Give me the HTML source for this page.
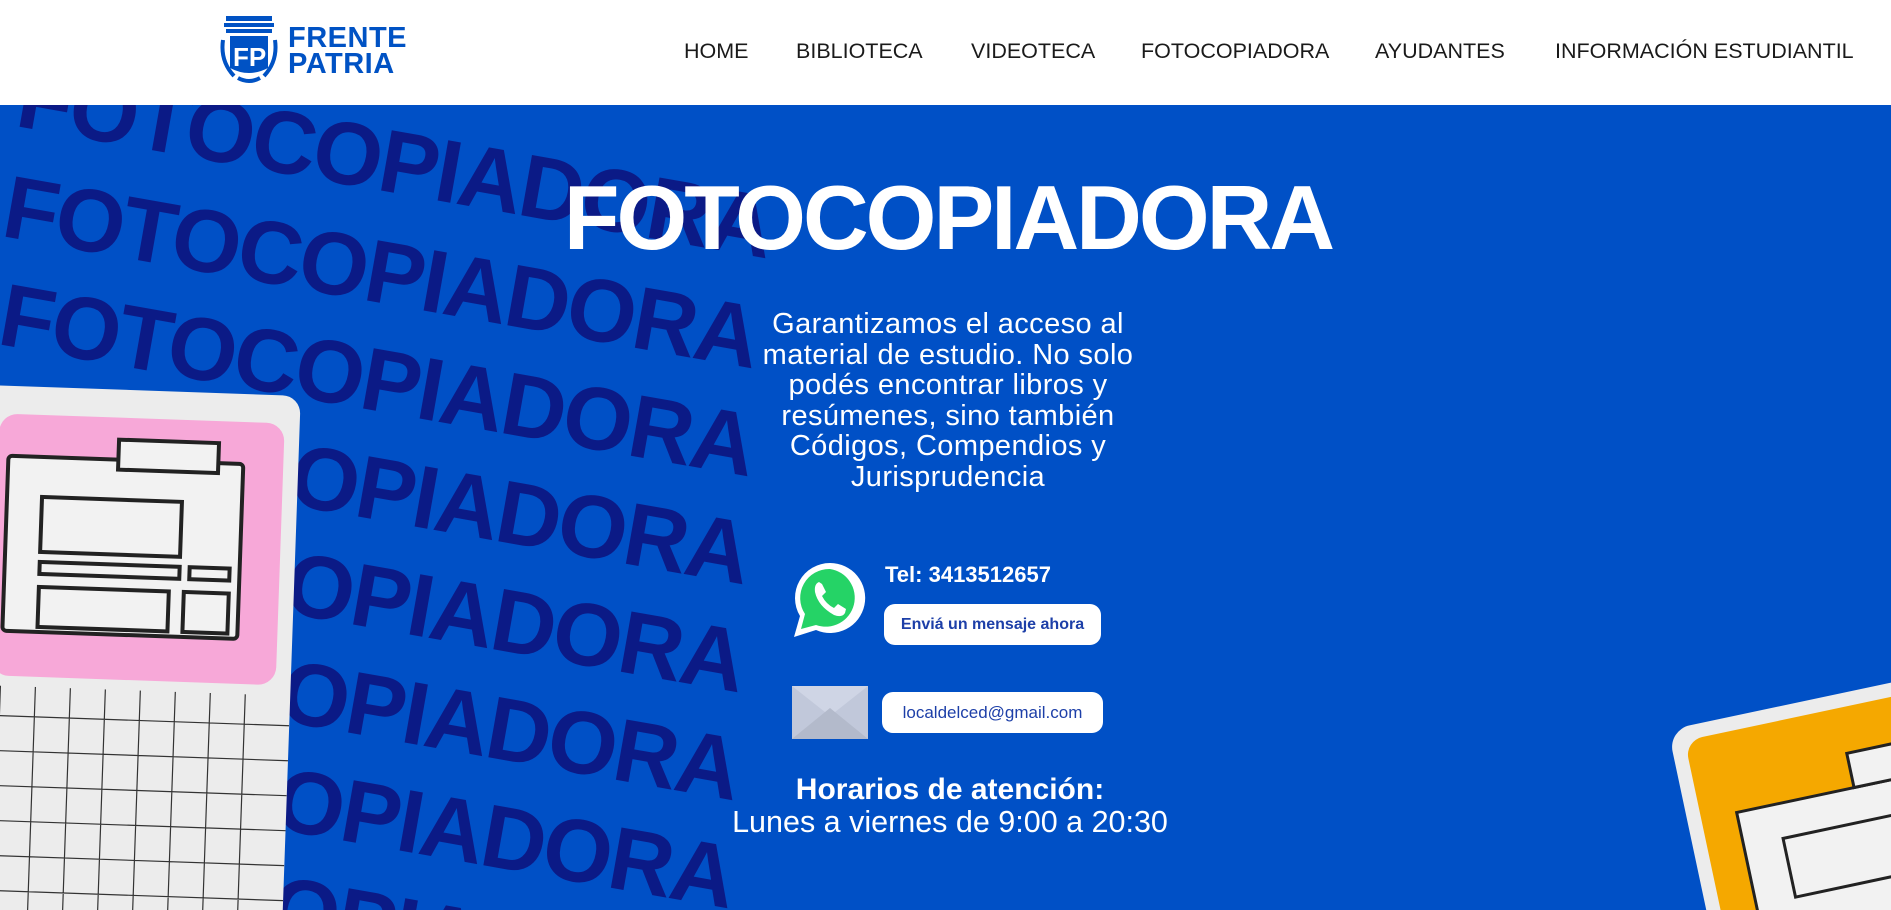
<!DOCTYPE html>
<html><head><meta charset="utf-8"><style>
*{margin:0;padding:0;box-sizing:border-box}
html,body{width:1891px;height:910px;overflow:hidden}
body{font-family:"Liberation Sans",sans-serif;background:#0052c4;position:relative}
header{position:absolute;left:0;top:0;width:1891px;height:105px;background:#fff;z-index:10}
nav a{position:absolute;top:39px;font-size:21.5px;color:#1a1a1a;text-decoration:none;white-space:nowrap}
.hero{position:absolute;left:0;top:105px;width:1891px;height:805px;background:#0050c6;overflow:hidden}
.bg{position:absolute;font-weight:bold;font-size:89px;color:#0b1a86;white-space:nowrap;transform-origin:0 0;transform:rotate(10deg);letter-spacing:-2px}
.w{position:absolute;color:#fff;text-align:center}
.btn{position:absolute;background:#fff;border-radius:11px;color:#1d3fa8;font-weight:bold;font-size:16px;display:flex;align-items:center;justify-content:center}
</style></head><body>
<header>
<svg style="position:absolute;left:220px;top:16px" width="70" height="68" viewBox="0 0 70 68">
<rect x="6" y="0" width="46" height="5" fill="#0052c4"/><rect x="4" y="7" width="50" height="4" fill="#0052c4"/><rect x="6" y="13" width="46" height="4" fill="#0052c4"/>
<path d="M10 20H48V52Q29 62 10 52Z" fill="#0052c4"/>
<text x="13" y="50" font-family="Liberation Sans" font-weight="bold" font-size="26" fill="#fff">FP</text>
<path d="M3 24Q0 45 14 60M55 24Q58 45 44 60" stroke="#0052c4" stroke-width="4" fill="none"/>
<path d="M18 62Q29 68 40 62" stroke="#0052c4" stroke-width="4" fill="none"/>
</svg>
<div style="position:absolute;left:288px;top:25px;color:#0052c4;font-weight:bold;font-size:29px;line-height:26px;letter-spacing:0.5px">FRENTE<br>PATRIA</div>
<nav>
<a style="left:684px">HOME</a><a style="left:796px">BIBLIOTECA</a><a style="left:971px">VIDEOTECA</a><a style="left:1141px">FOTOCOPIADORA</a><a style="left:1375px">AYUDANTES</a><a style="left:1555px">INFORMACIÓN ESTUDIANTIL</a>
</nav>
</header>
<div class="hero">
<div class="bg" style="left:28px;top:-60px">FOTOCOPIADORA</div>
<div class="bg" style="left:14px;top:50px">FOTOCOPIADORA</div>
<div class="bg" style="left:10px;top:158px">FOTOCOPIADORA</div>
<div class="bg" style="left:5px;top:266px">FOTOCOPIADORA</div>
<div class="bg" style="left:0px;top:374px">FOTOCOPIADORA</div>
<div class="bg" style="left:-5px;top:482px">FOTOCOPIADORA</div>
<div class="bg" style="left:-10px;top:590px">FOTOCOPIADORA</div>
<div class="bg" style="left:-15px;top:698px">FOTOCOPIADORA</div>
<div class="bg" style="left:-20px;top:806px">FOTOCOPIADORA</div>
<div style="position:absolute;left:-40px;top:285px;width:330px;height:620px;background:#ececec;border-radius:18px;transform:rotate(2deg);overflow:hidden">
<div style="position:absolute;left:30px;top:28px;width:285px;height:262px;background:#f7a8d8;border-radius:18px"></div>
<svg style="position:absolute;left:30px;top:40px" width="260" height="240"><g fill="#f2f2f2" stroke="#222" stroke-width="4"><rect x="10" y="30" width="235" height="175" rx="4" fill="#f2f2f2"/><rect x="120" y="10" width="100" height="30"/><rect x="45" y="70" width="140" height="55"/><rect x="45" y="135" width="140" height="12"/><rect x="195" y="135" width="40" height="12"/><rect x="45" y="160" width="130" height="40"/><rect x="190" y="160" width="45" height="40"/></g></svg>
<svg style="position:absolute;left:0;top:300px" width="330" height="320"><g stroke="#333" stroke-width="1.2">
<path d="M40 0V320M75 0V320M110 0V320M145 0V320M180 0V320M215 0V320M250 0V320M285 0V320M0 30H330M0 65H330M0 100H330M0 135H330M0 170H330M0 205H330M0 240H330M0 275H330M0 310H330"/></g></svg>
</div>
<div style="position:absolute;left:1668px;top:625px;width:300px;height:300px;background:#ececec;border-radius:22px;transform:rotate(-12deg);transform-origin:0 0">
<div style="position:absolute;left:14px;top:14px;width:290px;height:290px;background:#f5a800;border-radius:18px"></div>
<svg style="position:absolute;left:40px;top:40px" width="260" height="260"><g fill="#f2f2f2" stroke="#222" stroke-width="3"><rect x="10" y="55" width="240" height="200"/><rect x="130" y="20" width="90" height="35"/><rect x="50" y="90" width="150" height="60"/></g></svg>
</div>
<div class="w" style="left:548px;top:64px;width:800px;font-weight:bold;font-size:91px;line-height:100px;letter-spacing:-3px">FOTOCOPIADORA</div>
<div class="w" style="left:648px;top:204px;width:600px;font-size:29px;line-height:30.5px;letter-spacing:0.4px">Garantizamos el acceso al<br>material de estudio. No solo<br>podés encontrar libros y<br>resúmenes, sino también<br>Códigos, Compendios y<br>Jurisprudencia</div>
<svg style="position:absolute;left:792px;top:455px" width="76" height="80" viewBox="0 0 76 80">
<path d="M38 3A35 35 0 0 0 8 56L2 77L24 70A35 35 0 1 0 38 3Z" fill="#fff"/>
<path d="M38 9A29 29 0 0 0 13 54L9 69L24 65A29 29 0 1 0 38 9Z" fill="#25d366"/>
<path d="M27 22Q22 24 23 32Q26 46 42 55Q50 58 53 53L54 49L46 44L42 48Q34 44 30 36L34 32L30 24Z" fill="#fff"/>
</svg>
<div class="w" style="left:885px;top:457px;font-weight:bold;font-size:22px;text-align:left">Tel: 3413512657</div>
<div class="btn" style="left:884px;top:499px;width:217px;height:41px">Enviá un mensaje ahora</div>
<svg style="position:absolute;left:792px;top:581px" width="76" height="53"><rect width="76" height="53" fill="#c1c8da"/><path d="M0 0L38 30L76 0" fill="#cfd5e5"/><path d="M0 53L38 22L76 53Z" fill="#b3bacb"/></svg>
<div class="btn" style="left:882px;top:587px;width:221px;height:41px;font-weight:normal;font-size:17px">localdelced@gmail.com</div>
<div class="w" style="left:650px;top:669px;width:600px;font-weight:bold;font-size:30px;line-height:32px">Horarios de atención:</div>
<div class="w" style="left:600px;top:701px;width:700px;font-size:30.5px;line-height:32px">Lunes a viernes de 9:00 a 20:30</div>
</div>
</body></html>
